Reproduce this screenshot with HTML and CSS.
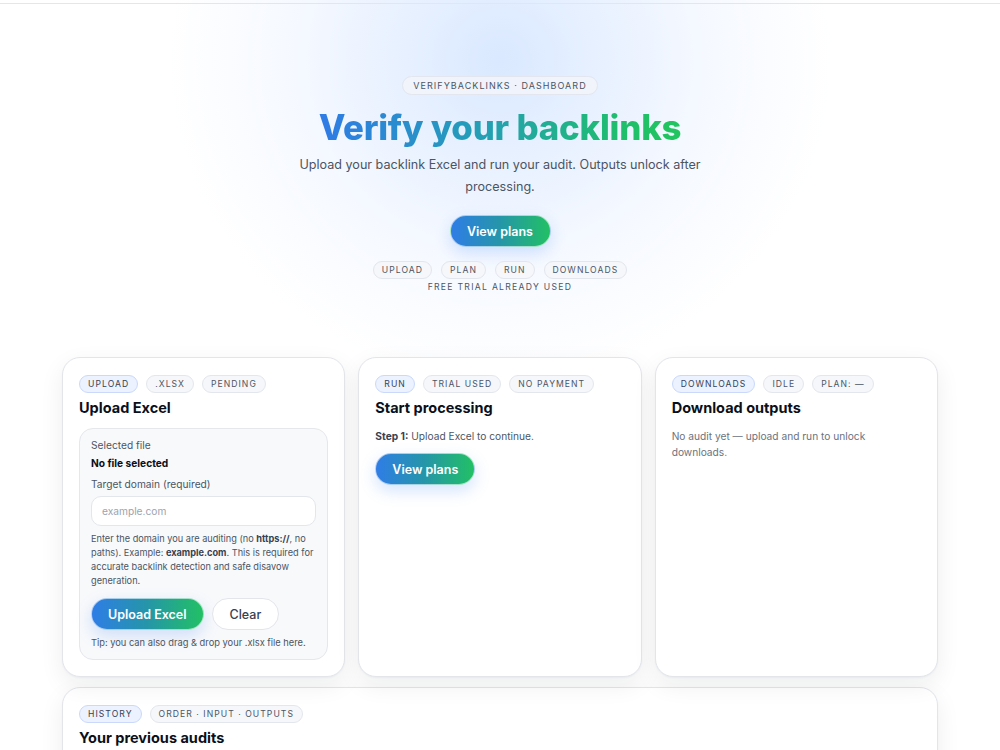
FILE: index.html
```html
<!DOCTYPE html>
<html lang="en">
<head>
<meta charset="utf-8">
<title>VerifyBacklinks · Dashboard</title>
<link rel="stylesheet" href="styles.css">
</head>
<body>
<div class="topbar"></div>
<main class="page">
  <section class="hero">
    <span class="kicker">VERIFYBACKLINKS · DASHBOARD</span>
    <h1 class="hero-title">Verify your backlinks</h1>
    <p class="hero-sub">Upload your backlink Excel and run your audit. Outputs unlock after processing.</p>
    <button class="btn btn-primary hero-btn">View plans</button>
    <div class="steps">
      <span class="pill">UPLOAD</span>
      <span class="pill">PLAN</span>
      <span class="pill">RUN</span>
      <span class="pill">DOWNLOADS</span>
    </div>
    <div class="trial">FREE TRIAL ALREADY USED</div>
  </section>

  <section class="grid">
    <div class="card">
      <div class="badges">
        <span class="pill pill-accent">UPLOAD</span>
        <span class="pill">.XLSX</span>
        <span class="pill">PENDING</span>
      </div>
      <h2 class="card-title">Upload Excel</h2>
      <div class="inner">
        <div class="label">Selected file</div>
        <div class="file">No file selected</div>
        <div class="label label-gap">Target domain (required)</div>
        <div class="input">example.com</div>
        <p class="help">Enter the domain you are auditing (no <b>https://</b>, no paths). Example: <b>example.com</b>. This is required for accurate backlink detection and safe disavow generation.</p>
        <div class="actions">
          <button class="btn btn-primary btn-lg">Upload Excel</button>
          <button class="btn btn-ghost btn-lg">Clear</button>
        </div>
        <div class="tip">Tip: you can also drag &amp; drop your .xlsx file here.</div>
      </div>
    </div>

    <div class="card">
      <div class="badges">
        <span class="pill pill-accent">RUN</span>
        <span class="pill">TRIAL USED</span>
        <span class="pill">NO PAYMENT</span>
      </div>
      <h2 class="card-title">Start processing</h2>
      <p class="text"><b>Step 1:</b> Upload Excel to continue.</p>
      <div>
        <button class="btn btn-primary btn-md">View plans</button>
      </div>
    </div>

    <div class="card">
      <div class="badges">
        <span class="pill pill-accent">DOWNLOADS</span>
        <span class="pill">IDLE</span>
        <span class="pill">PLAN: —</span>
      </div>
      <h2 class="card-title">Download outputs</h2>
      <p class="text muted">No audit yet — upload and run to unlock downloads.</p>
    </div>
  </section>

  <section class="card history">
    <div class="badges">
      <span class="pill pill-accent">HISTORY</span>
      <span class="pill">ORDER · INPUT · OUTPUTS</span>
    </div>
    <h2 class="card-title">Your previous audits</h2>
  </section>
</main>
</body>
</html>
```

FILE: styles.css
```css
* { box-sizing: border-box; }
html, body { margin: 0; padding: 0; }
body {
  font-family: Inter, "Noto Sans", sans-serif;
  color: #0f172a;
  background:
    radial-gradient(ellipse 330px 320px at 500px 60px, rgba(205, 225, 255, 0.75), rgba(225, 236, 255, 0.35) 60%, rgba(255,255,255,0) 100%),
    #ffffff;
  background-repeat: no-repeat;
  min-height: 750px;
}
.topbar {
  height: 4px;
  border-bottom: 1px solid #e4e6ea;
}
.page {
  width: 876px;
  margin: 0 auto;
}
.hero {
  display: flex;
  flex-direction: column;
  align-items: center;
  padding-top: 72px;
  padding-bottom: 65px;
  text-align: center;
}
.kicker {
  font-size: 9px;
  letter-spacing: 1.05px;
  color: #4b5563;
  background: rgba(243, 245, 250, 0.85);
  border: 1px solid #e3e6ee;
  border-radius: 999px;
  padding: 3px 10px 3px;
  line-height: 11px;
  font-weight: 400;
}
.hero-title {
  margin: 11px 0 0;
  font-size: 34.8px;
  line-height: 42px;
  font-weight: 800;
  letter-spacing: -0.2px;
  background: linear-gradient(90deg, #2f7be6 0%, #249fb5 45%, #1fbf6a 85%, #22c55e 100%);
  -webkit-background-clip: text;
  background-clip: text;
  color: transparent;
}
.hero-sub {
  margin: 6px 0 0;
  width: 410px;
  font-size: 12.6px;
  line-height: 22px;
  color: #4b5563;
}
.btn {
  font-family: inherit;
  border-radius: 999px;
  cursor: pointer;
  font-weight: 600;
}
.btn-primary {
  color: #fff;
  border: 1px solid rgba(255,255,255,0.6);
  background: linear-gradient(90deg, #2f7de6 0%, #2596a8 50%, #22c064 100%);
  box-shadow: 0 6px 16px rgba(59, 130, 246, 0.22);
}
.hero-btn {
  margin-top: 17px;
  height: 32px;
  width: 101px;
  font-size: 12.5px;
}
.steps {
  display: flex;
  gap: 9px;
  margin-top: 14px;
}
.pill {
  display: inline-block;
  font-size: 8.6px;
  letter-spacing: 1.05px;
  line-height: 11px;
  color: #4b5563;
  border: 1px solid #e3e6ec;
  background: #f6f7fa;
  border-radius: 999px;
  padding: 2.5px 8px;
  font-weight: 400;
}
.trial {
  margin-top: 3px;
  font-size: 8.6px;
  letter-spacing: 1.3px;
  color: #4b5563;
  font-weight: 400;
}
.grid {
  display: grid;
  grid-template-columns: repeat(3, 1fr);
  gap: 13px;
  height: 318px;
}
.card {
  background: #fff;
  border: 1px solid #e3e5ea;
  border-radius: 18px;
  padding: 17px 16px 16px;
  box-shadow: 0 8px 24px rgba(15, 23, 42, 0.07), 0 1px 2px rgba(15,23,42,0.04);
}
.badges {
  display: flex;
  gap: 8px;
}
.pill-accent {
  background: #ecf2ff;
  border-color: #c9d8fb;
  color: #374151;
}
.card-title {
  margin: 6px 0 0;
  font-size: 14.5px;
  line-height: 18px;
  font-weight: 700;
  color: #0b0f19;
}
.inner {
  margin-top: 11px;
  background: #f8f9fb;
  border: 1px solid #e5e7eb;
  border-radius: 14px;
  padding: 10px 11px 10px;
}
.label {
  font-size: 10.2px;
  line-height: 13px;
  color: #4b5563;
}
.label-gap { margin-top: 8px; }
.file {
  margin-top: 5px;
  font-size: 10.2px;
  line-height: 13px;
  font-weight: 700;
  color: #0b0f19;
}
.input {
  margin-top: 5px;
  height: 30px;
  background: #fff;
  border: 1px solid #e3e6eb;
  border-radius: 10px;
  padding: 0 10px;
  font-size: 10.2px;
  line-height: 28px;
  color: #9ca3af;
}
.help {
  margin: 6px 0 0;
  font-size: 9.2px;
  line-height: 14px;
  color: #4b5563;
}
.help b { color: #374151; }
.actions {
  display: flex;
  gap: 8px;
  margin-top: 10px;
}
.btn-lg {
  height: 32px;
  font-size: 12.5px;
  padding: 0 16px;
}
.btn-ghost {
  background: #fff;
  border: 1px solid #e3e5ea;
  color: #374151;
  padding: 0 17px;
  font-weight: 500;
}
.tip {
  margin-top: 7px;
  font-size: 9.3px;
  line-height: 12px;
  color: #4b5563;
}
.text {
  margin: 11px 0 0;
  font-size: 10.2px;
  line-height: 16px;
  color: #4b5563;
}
.text b { color: #374151; }
.muted { color: #6b7280; width: 220px; }
.btn-md {
  margin-top: 9px;
  height: 32px;
  width: 100px;
  font-size: 12.5px;
}
.history {
  margin-top: 12px;
  height: 90px;
  padding-top: 17px;
}
```
